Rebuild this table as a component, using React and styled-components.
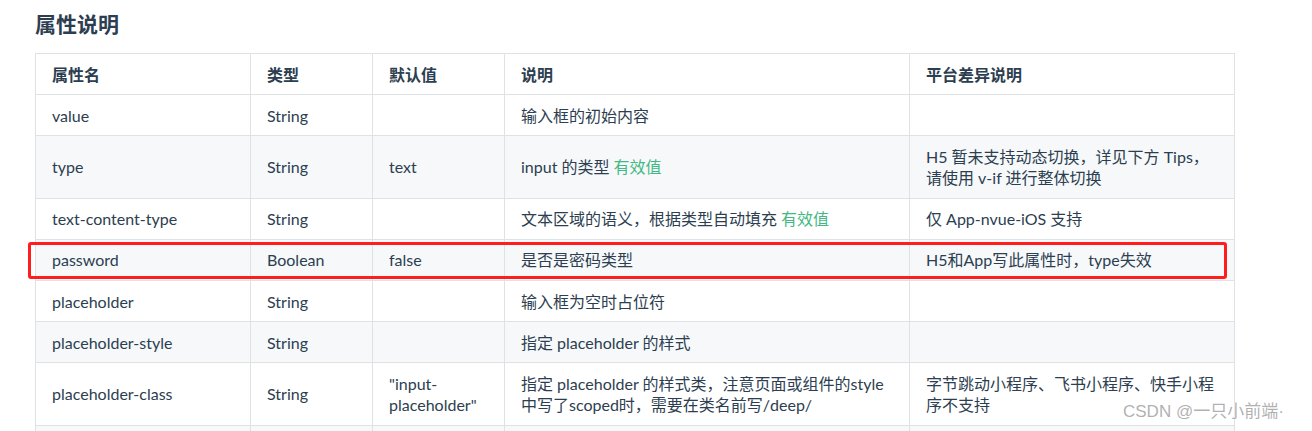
import React from 'react';
import styled, { createGlobalStyle } from 'styled-components';

const GlobalStyle = createGlobalStyle`
  html, body {
    margin: 0;
    padding: 0;
    background: #fff;
  }
  body {
    font-family: Lato, "Noto Sans CJK SC", sans-serif;
    color: #2c3e50;
    -webkit-font-smoothing: antialiased;
  }
`;

const Page = styled.div`
  position: relative;
  width: 1312px;
  height: 431px;
  overflow: hidden;
  padding: 0 0 0 35px;
  box-sizing: border-box;
`;

const Title = styled.h2`
  margin: 0;
  padding-top: 10px;
  height: 53px;
  box-sizing: border-box;
  font-size: 21px;
  line-height: 27px;
  font-weight: 700;
  color: #2c3e50;
`;

const TableWrap = styled.div`
  position: relative;
  width: 1199px;
`;

const Table = styled.table`
  border-collapse: collapse;
  table-layout: fixed;
  width: 1199px;
  font-size: 16px;
  line-height: 21px;
`;

const Row = styled.tr`
  background: ${({ $striped }) => ($striped ? '#f6f8fa' : '#fff')};
`;

const HeadCell = styled.th`
  border: 1px solid #dfe2e5;
  padding: 9.6px 16px;
  text-align: left;
  font-weight: 700;
  color: #2c3e50;
`;

const Cell = styled.td`
  border: 1px solid #dfe2e5;
  padding: 9.6px 16px;
  vertical-align: middle;
  color: #2c3e50;
`;

const Link = styled.a`
  color: #42b983;
  text-decoration: none;
`;

const Highlight = styled.div`
  position: absolute;
  left: -7px;
  top: 189px;
  width: 1199px;
  height: 37px;
  box-sizing: border-box;
  border: 3px solid #ff1d1d;
  border-radius: 3px;
  pointer-events: none;
`;

const Watermark = styled.div`
  position: absolute;
  left: 1123px;
  top: 401px;
  font-family: "Liberation Sans", "Noto Sans CJK SC", sans-serif;
  font-size: 17px;
  line-height: 22px;
  color: rgba(150, 150, 150, 0.75);
  text-shadow: 0 0 2px #fff, 0 0 2px #fff;
  white-space: nowrap;
`;

const columns = [
  { title: '属性名', width: 215 },
  { title: '类型', width: 122 },
  { title: '默认值', width: 132 },
  { title: '说明', width: 405 },
  { title: '平台差异说明', width: 325 },
];

const rows = [
  ['value', 'String', '', '输入框的初始内容', ''],
  [
    'type',
    'String',
    'text',
    <>input 的类型 <Link>有效值</Link></>,
    <>H5 暂未支持动态切换，详见下方 Tips，<br />请使用 v-if 进行整体切换</>,
  ],
  [
    'text-content-type',
    'String',
    '',
    <>文本区域的语义，根据类型自动填充 <Link>有效值</Link></>,
    '仅 App-nvue-iOS 支持',
  ],
  ['password', 'Boolean', 'false', '是否是密码类型', 'H5和App写此属性时，type失效'],
  ['placeholder', 'String', '', '输入框为空时占位符', ''],
  ['placeholder-style', 'String', '', '指定 placeholder 的样式', ''],
  [
    'placeholder-class',
    'String',
    <>"input-<br />placeholder"</>,
    <>指定 placeholder 的样式类，注意页面或组件的style<br />中写了scoped时，需要在类名前写/deep/</>,
    <>字节跳动小程序、飞书小程序、快手小程<br />序不支持</>,
  ],
  ['', '', '', '', ''],
];

export default function App() {
  return (
    <>
      <GlobalStyle />
      <Page>
        <Title>属性说明</Title>
        <TableWrap>
          <Table>
            <colgroup>
              {columns.map((c) => (
                <col key={c.title} style={{ width: c.width }} />
              ))}
            </colgroup>
            <thead>
              <Row>
                {columns.map((c) => (
                  <HeadCell key={c.title}>{c.title}</HeadCell>
                ))}
              </Row>
            </thead>
            <tbody>
              {rows.map((r, i) => (
                <Row key={i} $striped={i % 2 === 1}>
                  {r.map((v, j) => (
                    <Cell key={j}>{v || '\u00a0'}</Cell>
                  ))}
                </Row>
              ))}
            </tbody>
          </Table>
          <Highlight />
        </TableWrap>
        <Watermark>CSDN @一只小前端·</Watermark>
      </Page>
    </>
  );
}
